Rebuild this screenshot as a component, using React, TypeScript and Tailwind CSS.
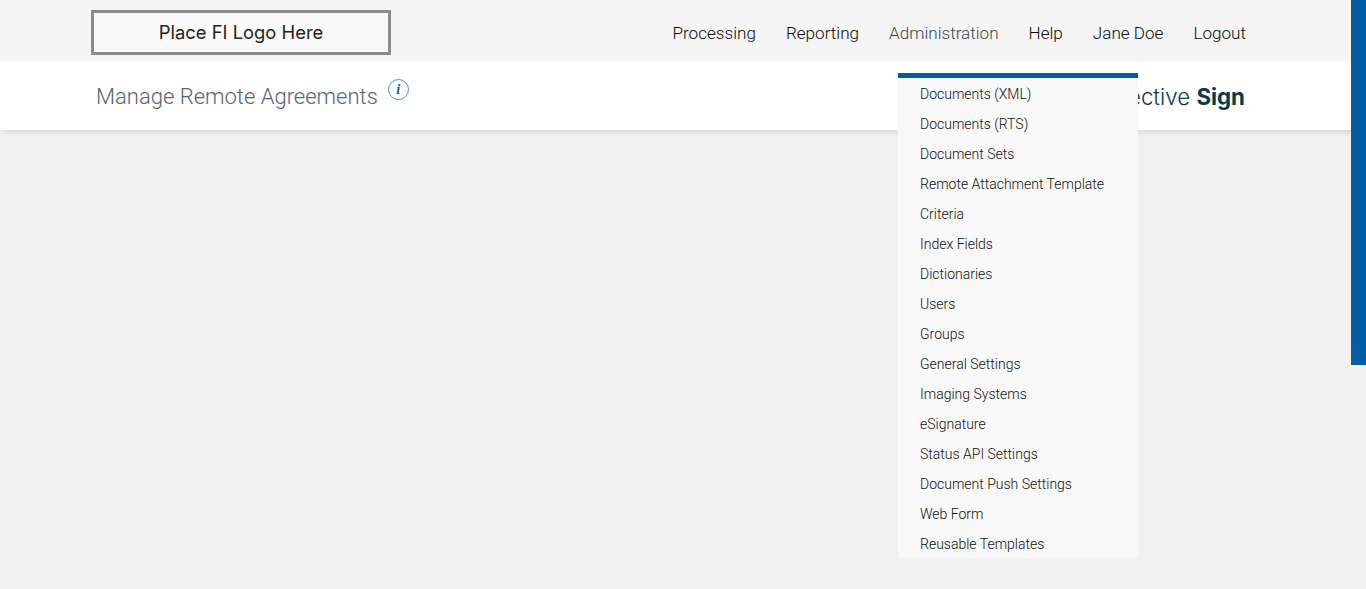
const navItems = ["Processing", "Reporting", "Administration", "Help", "Jane Doe", "Logout"];

const adminItems = [
  "Documents (XML)",
  "Documents (RTS)",
  "Document Sets",
  "Remote Attachment Template",
  "Criteria",
  "Index Fields",
  "Dictionaries",
  "Users",
  "Groups",
  "General Settings",
  "Imaging Systems",
  "eSignature",
  "Status API Settings",
  "Document Push Settings",
  "Web Form",
  "Reusable Templates",
];

function AdminMenu() {
  return (
    <ul className="absolute left-[898px] top-[73px] z-10 h-[485px] w-[240px] overflow-hidden border-t-[5px] border-[#005da6] bg-[#f8f8f8] pt-[1px]">
      {adminItems.map((item) => (
        <li key={item} className="flex h-[30px] items-center pl-[22px] text-[14px] font-[350] text-[#111]">
          {item}
        </li>
      ))}
    </ul>
  );
}

export default function App() {
  return (
    <div className="relative h-[589px] w-full overflow-hidden bg-[#f1f1f1] font-['Roboto',sans-serif]">
      <header className="flex h-[62px] items-center justify-between bg-[#f5f5f5] pl-[91px] pr-[120px]">
        <div className="mt-[3px] flex h-[45px] w-[300px] items-center justify-center border-[3px] border-[#8c8c8c] bg-[#fafafa] font-['Inter',sans-serif] text-[18.4px] text-[#222]">
          Place FI Logo Here
        </div>
        <nav className="mt-[6px] flex gap-[30px] text-[17.1px] font-light">
          {navItems.map((item) => (
            <a key={item} className={item === "Administration" ? "text-[#444]" : "text-[#0a0a0a]"}>
              {item}
            </a>
          ))}
        </nav>
      </header>

      <div className="flex h-[68px] items-center justify-between bg-white pl-[96px] pr-[121px] shadow-[0_4px_6px_-2px_rgba(0,0,0,0.12)]">
        <div className="flex items-start gap-[10px]">
          <h1 className="mt-[1px] text-[22px] font-light text-[#56657a]">Manage Remote Agreements</h1>
          <span className="flex h-[21px] w-[21px] items-center justify-center rounded-full border border-[#3d8fd1] font-['Liberation_Serif',serif] text-[14px] font-bold italic text-[#005da6]">
            i
          </span>
        </div>
        <div className="mt-[2px] font-['Inter',sans-serif] text-[22.3px] font-light text-[#0b3c44]">
          Objective <span className="font-bold">Sign</span>
        </div>
      </div>

      <AdminMenu />

      <div className="absolute right-0 top-0 h-[365px] w-[15px] bg-[#005da6]" />
    </div>
  );
}
